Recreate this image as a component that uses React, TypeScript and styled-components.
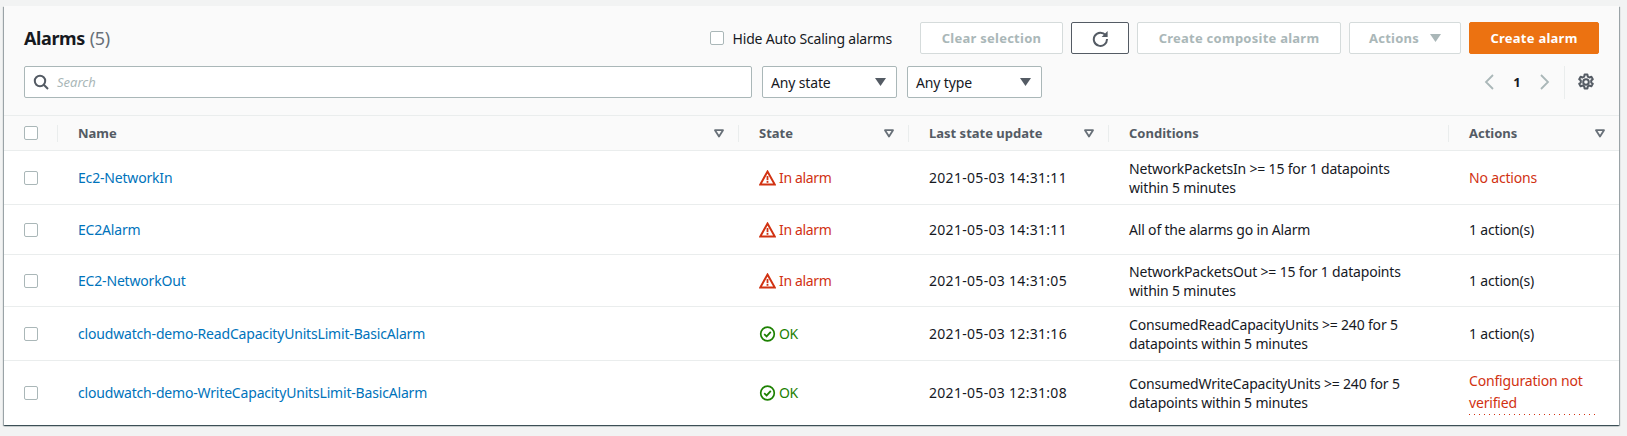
import styled, { createGlobalStyle } from "styled-components";

const GlobalStyle = createGlobalStyle`
  html, body {
    margin: 0;
    background: #f2f3f3;
    font-family: "Noto Sans", "Open Sans", sans-serif;
    color: #16191f;
  }
`;

const Page = styled.div`
  padding: 6px 8px 12px 4px;
`;

const Panel = styled.div`
  background: #fff;
  box-shadow: 0 1px 1px 0 rgba(0, 28, 36, 0.5), 1px 1px 1px 0 rgba(0, 28, 36, 0.3),
    -1px 1px 1px 0 rgba(0, 28, 36, 0.3);
`;

const Header = styled.div`
  background: #fafafa;
  border-bottom: 1px solid #eaeded;
  padding: 16px 20px 16px 20px;
  height: 77px;
  box-sizing: content-box;
`;

const TopRow = styled.div`
  display: flex;
  align-items: center;
  height: 32px;
`;

const Title = styled.h2`
  margin: 0;
  font-size: 18px;
  line-height: 24px;
  font-weight: 700;
  letter-spacing: -0.4px;
  flex: 1;
`;

const Count = styled.span`
  font-weight: 400;
  color: #687078;
  margin-left: 5px;
`;

const Check = styled.span`
  display: inline-block;
  box-sizing: border-box;
  width: 14px;
  height: 14px;
  border: 1px solid #aab7b8;
  border-radius: 2px;
  background: #fff;
`;

const HideLabel = styled.label`
  display: flex;
  align-items: center;
  gap: 9px;
  font-size: 14px;
  letter-spacing: -0.2px;
  margin-right: 28px;
`;

const Button = styled.button<{ $w: number; $tone?: "off" | "normal" | "primary" }>`
  display: flex;
  align-items: center;
  justify-content: center;
  gap: 11px;
  box-sizing: border-box;
  width: ${(p) => p.$w}px;
  height: 32px;
  margin-right: 8px;
  padding: 0;
  border-radius: 2px;
  font: 700 13px "Noto Sans", sans-serif;
  letter-spacing: 0.25px;
  color: ${(p) => (p.$tone === "primary" ? "#fff" : "#aab7b8")};
  background: ${(p) => (p.$tone === "primary" ? "#ec7211" : "#fff")};
  border: 1px solid
    ${(p) =>
      p.$tone === "primary" ? "#ec7211" : p.$tone === "normal" ? "#545b64" : "#d5dbdb"};
  &:last-child {
    margin-right: 0;
  }
`;

const BottomRow = styled.div`
  display: flex;
  align-items: center;
  height: 32px;
  margin-top: 12px;
`;

const SearchBox = styled.div`
  display: flex;
  align-items: center;
  gap: 8px;
  box-sizing: border-box;
  width: 728px;
  height: 32px;
  padding-left: 8px;
  border: 1px solid #aab7b8;
  border-radius: 2px;
  background: #fff;
  margin-right: 10px;
`;

const Placeholder = styled.span`
  font-size: 13px;
  font-style: italic;
  color: #aab7b8;
`;

const Select = styled.div`
  display: flex;
  align-items: center;
  justify-content: space-between;
  box-sizing: border-box;
  width: 135px;
  height: 32px;
  padding: 0 10px 0 8px;
  border: 1px solid #aab7b8;
  border-radius: 2px;
  background: #fff;
  font-size: 14px;
  letter-spacing: -0.15px;
  margin-right: 10px;
`;

const Pager = styled.div`
  margin-left: auto;
  display: flex;
  align-items: center;
  height: 32px;
  padding-right: 4px;
`;

const PageNo = styled.span`
  font-size: 13px;
  font-weight: 700;
  width: 46px;
  text-align: center;
`;

const PagerRule = styled.span`
  width: 1px;
  height: 33px;
  background: #eaeded;
  margin: 0 12px 0 14px;
`;

const PagerIcon = styled.svg`
  display: block;
`;

const Table = styled.table`
  width: 100%;
  table-layout: fixed;
  border-collapse: collapse;
  font-size: 14px;
  letter-spacing: -0.18px;
`;

const HeadCell = styled.th<{ $w?: number }>`
  width: ${(p) => (p.$w ? `${p.$w}px` : "auto")};
  height: 34px;
  padding: 0;
  background: #fafafa;
  border-bottom: 1px solid #eaeded;
  text-align: left;
  font-size: 13px;
  letter-spacing: 0;
  font-weight: 700;
  color: #545b64;
`;

const HeadInner = styled.div`
  display: flex;
  align-items: center;
  justify-content: space-between;
  box-sizing: border-box;
  height: 17px;
  padding: 0 14px 0 20px;
  border-left: 1px solid #eaeded;
`;

const CheckHead = styled.div`
  display: flex;
  padding-left: 20px;
`;

const Row = styled.tr<{ $h: number }>`
  height: ${(p) => p.$h}px;
  border-bottom: 1px solid #eaeded;
  &:last-child {
    border-bottom: none;
  }
`;

const Cell = styled.td<{ $color?: string }>`
  padding: 0 20px 0 21px;
  line-height: 19px;
  color: ${(p) => p.$color ?? "#16191f"};
`;

const DateCell = styled(Cell)`
  letter-spacing: 0.3px;
`;

const CheckCell = styled.td`
  padding: 0 0 0 20px;
  line-height: 0;
`;

const NameLink = styled.a`
  color: #0073bb;
  text-decoration: none;
`;

const StateWrap = styled.span<{ $ok?: boolean }>`
  display: flex;
  align-items: center;
  gap: 3px;
  letter-spacing: -0.35px;
  color: ${(p) => (p.$ok ? "#1d8102" : "#d13212")};
`;

const Unverified = styled.span`
  display: block;
  color: #d13212;
  line-height: 22px;
  padding-bottom: 1px;
  background: linear-gradient(to right, #d13212 1px, transparent 1px) left bottom / 5px 1px repeat-x;
`;

const Caret = ({ fill = "#545b64" }: { fill?: string }) => (
  <svg width="11" height="8" viewBox="0 0 11 8">
    <path d="M0 0h11L5.5 8z" fill={fill} />
  </svg>
);

const SortCaret = () => (
  <svg width="10" height="9" viewBox="0 0 10 9">
    <path d="M1 1.2h8L5 7.6z" fill="none" stroke="#687078" strokeWidth="1.8" strokeLinejoin="round" />
  </svg>
);

const Refresh = () => (
  <svg width="17" height="17" viewBox="0 0 17 17">
    <path d="M13.6 5.2A6.6 6.6 0 1 0 15 9" fill="none" stroke="#545b64" strokeWidth="2" />
    <path d="M15.6 1v6h-6z" fill="#545b64" />
  </svg>
);

const Warn = () => (
  <svg width="17" height="16" viewBox="0 0 17 16">
    <path d="M8.5 1.6 15.8 14.6H1.2z" fill="none" stroke="#d13212" strokeWidth="2" strokeLinejoin="miter" />
    <path d="M8.5 6v4.2" stroke="#d13212" strokeWidth="1.8" />
    <path d="M8.5 11v1.8" stroke="#d13212" strokeWidth="1.8" />
  </svg>
);

const Ok = () => (
  <svg width="17" height="16" viewBox="0 0 17 16">
    <circle cx="8.5" cy="8" r="6.8" fill="none" stroke="#1d8102" strokeWidth="1.7" />
    <path d="M5.2 8.2 7.6 10.4 11.8 5.9" fill="none" stroke="#1d8102" strokeWidth="1.8" />
  </svg>
);

const alarms = [
  { name: "Ec2-NetworkIn", ok: false, at: "2021-05-03 14:31:11", cond: "NetworkPacketsIn >= 15 for 1 datapoints within 5 minutes", act: "No actions", h: 54 },
  { name: "EC2Alarm", ok: false, at: "2021-05-03 14:31:11", cond: "All of the alarms go in Alarm", act: "1 action(s)", h: 50 },
  { name: "EC2-NetworkOut", ok: false, at: "2021-05-03 14:31:05", cond: "NetworkPacketsOut >= 15 for 1 datapoints within 5 minutes", act: "1 action(s)", h: 52 },
  { name: "cloudwatch-demo-ReadCapacityUnitsLimit-BasicAlarm", ok: true, at: "2021-05-03 12:31:16", cond: "ConsumedReadCapacityUnits >= 240 for 5 datapoints within 5 minutes", act: "1 action(s)", h: 54 },
  { name: "cloudwatch-demo-WriteCapacityUnitsLimit-BasicAlarm", ok: true, at: "2021-05-03 12:31:08", cond: "ConsumedWriteCapacityUnits >= 240 for 5 datapoints within 5 minutes", act: "unverified", h: 64 },
];

const columns = [
  { label: "Name", w: 681 },
  { label: "State", w: 170 },
  { label: "Last state update", w: 200 },
  { label: "Conditions", w: 340, noSort: true },
  { label: "Actions" },
];

export default function App() {
  return (
    <Page>
      <GlobalStyle />
      <Panel>
        <Header>
          <TopRow>
            <Title>
              Alarms<Count>(5)</Count>
            </Title>
            <HideLabel>
              <Check />
              Hide Auto Scaling alarms
            </HideLabel>
            <Button $w={143} $tone="off">Clear selection</Button>
            <Button $w={58} $tone="normal">
              <Refresh />
            </Button>
            <Button $w={204} $tone="off">Create composite alarm</Button>
            <Button $w={112} $tone="off">
              Actions <Caret fill="#aab7b8" />
            </Button>
            <Button $w={130} $tone="primary">Create alarm</Button>
          </TopRow>
          <BottomRow>
            <SearchBox>
              <svg width="16" height="16" viewBox="0 0 16 16">
                <circle cx="7" cy="7" r="5.2" fill="none" stroke="#545b64" strokeWidth="2" />
                <path d="M10.8 10.8 15 15" stroke="#545b64" strokeWidth="2" />
              </svg>
              <Placeholder>Search</Placeholder>
            </SearchBox>
            <Select>
              Any state <Caret />
            </Select>
            <Select>
              Any type <Caret />
            </Select>
            <Pager>
              <PagerIcon width="10" height="16" viewBox="0 0 10 16">
                <path d="M9 1 2 8l7 7" fill="none" stroke="#aab7b8" strokeWidth="1.8" />
              </PagerIcon>
              <PageNo>1</PageNo>
              <PagerIcon width="10" height="16" viewBox="0 0 10 16">
                <path d="M1 1l7 7-7 7" fill="none" stroke="#aab7b8" strokeWidth="1.8" />
              </PagerIcon>
              <PagerRule />
              <PagerIcon width="18" height="18" viewBox="0 0 18 18">
                <circle cx="9" cy="9" r="2.8" fill="none" stroke="#545b64" strokeWidth="2" />
                <path
                  d="M7.6 1.5h2.8l.4 2.1 1.6.9 2-.7 1.4 2.4-1.6 1.4v1.8l1.6 1.4-1.4 2.4-2-.7-1.6.9-.4 2.1H7.6l-.4-2.1-1.6-.9-2 .7-1.4-2.4 1.6-1.4V7.6L2.2 6.2l1.4-2.4 2 .7 1.6-.9z"
                  fill="none"
                  stroke="#545b64"
                  strokeWidth="2"
                  strokeLinejoin="round"
                />
              </PagerIcon>
            </Pager>
          </BottomRow>
        </Header>
        <Table>
          <thead>
            <tr>
              <HeadCell $w={53}>
                <CheckHead>
                  <Check />
                </CheckHead>
              </HeadCell>
              {columns.map((c) => (
                <HeadCell key={c.label} $w={c.w}>
                  <HeadInner>
                    {c.label}
                    {!c.noSort && <SortCaret />}
                  </HeadInner>
                </HeadCell>
              ))}
            </tr>
          </thead>
          <tbody>
            {alarms.map((a) => (
              <Row key={a.name} $h={a.h}>
                <CheckCell>
                  <Check />
                </CheckCell>
                <Cell>
                  <NameLink href="#">{a.name}</NameLink>
                </Cell>
                <Cell>
                  <StateWrap $ok={a.ok}>
                    {a.ok ? <Ok /> : <Warn />}
                    {a.ok ? "OK" : "In alarm"}
                  </StateWrap>
                </Cell>
                <DateCell>{a.at}</DateCell>
                <Cell>{a.cond}</Cell>
                <Cell $color={a.act === "No actions" ? "#d13212" : undefined}>
                  {a.act === "unverified" ? <Unverified>Configuration not verified</Unverified> : a.act}
                </Cell>
              </Row>
            ))}
          </tbody>
        </Table>
      </Panel>
    </Page>
  );
}
